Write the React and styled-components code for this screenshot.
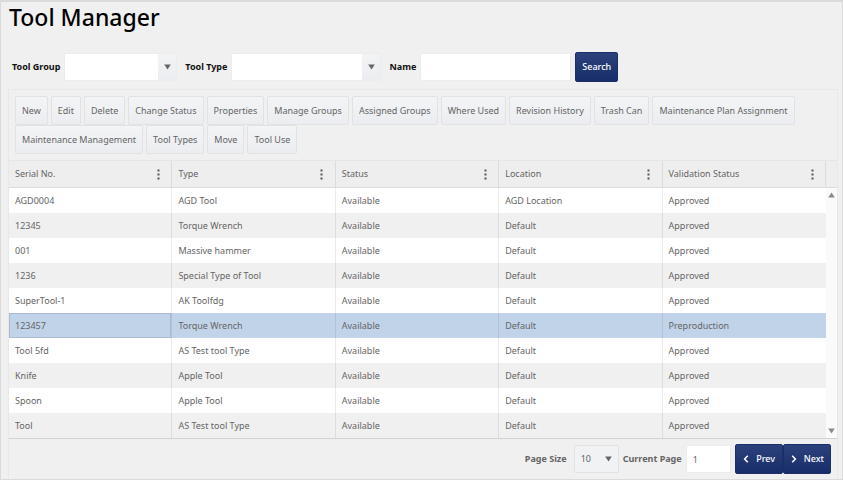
import React, { useState } from 'react';
import styled, { createGlobalStyle } from 'styled-components';

const GlobalStyle = createGlobalStyle`
  * {
    box-sizing: border-box;
  }
  body {
    margin: 0;
    background: #f0f0f0;
    color: #656565;
    font-family: "Noto Sans", "Open Sans", sans-serif;
    font-size: 9px;
    line-height: 12px;
  }
  button, input, select {
    font: inherit;
    color: inherit;
    margin: 0;
  }
`;

const Page = styled.main`
  min-height: 100vh;
  padding: 0 4px 0 7px;
  border: 1px solid #dadada;
  border-width: 2px 1px 1px 1px;
`;

const Title = styled.h1`
  margin: 0 0 20px 1px;
  font-size: 23px;
  line-height: 30px;
  font-weight: 500;
  color: #000;
`;

const SearchForm = styled.form`
  display: flex;
  align-items: center;
  gap: 4px;
  padding-left: 4px;
  margin-bottom: 7px;
`;

const Field = styled.div`
  display: flex;
  align-items: center;
  gap: ${p => p.$wide ? "7px" : "4px"};
  margin-right: ${p => p.$tight ? "0" : "4px"};
`;

const Label = styled.label`
  font-weight: 700;
  white-space: nowrap;
  color: ${p => p.$muted ? "#656565" : "#111"};
`;

const SelectBox = styled.div`
  display: grid;
  width: ${p => p.$width}px;
`;

const Select = styled.select`
  grid-area: 1 / 1;
  width: 100%;
  height: 28px;
  padding: 0 6px;
  appearance: none;
  border: 1px solid ${p => p.$flat ? "#e2e2e2" : "#ececec"};
  border-radius: 2px;
  background: ${p => p.$flat ? "#f1f2f4" : "#fff"};
`;

const SelectArrow = styled.span`
  grid-area: 1 / 1;
  justify-self: end;
  display: flex;
  align-items: center;
  justify-content: center;
  width: 18px;
  margin: 1px;
  pointer-events: none;
  background: ${p => p.$flat ? "none" : "linear-gradient(#f2f3f5, #ebedf0)"};
`;

const TextInput = styled.input`
  width: ${p => p.$width}px;
  height: 28px;
  padding: 0 6px;
  border: 1px solid #ececec;
  border-radius: 2px;
  background: #fff;
`;

const PrimaryButton = styled.button`
  display: flex;
  align-items: center;
  justify-content: center;
  gap: ${p => p.$paging ? "6px" : "0"};
  min-width: ${p => p.$paging ? "48px" : "43px"};
  height: 30px;
  padding: 0 6px;
  border: 1px solid #1a2f68;
  border-radius: 2px;
  background: linear-gradient(#2d427c, #172d69);
  color: #fff;
  font-weight: 500;
`;

const Panel = styled.section`
  border: 1px solid #e8e8e8;
  border-bottom: 0;
`;

const Toolbar = styled.div`
  display: flex;
  flex-wrap: wrap;
  column-gap: 3px;
  padding: 6px;
`;

const ToolButton = styled.button`
  height: 29px;
  padding: 0 6px;
  border: 1px solid #e1e2e3;
  border-radius: 2px;
  background: linear-gradient(#f3f4f6, #ebedf0);
`;

const Grid = styled.div`
  display: flex;
  border-top: 1px solid #e6e6e6;
  border-bottom: 1px solid #d2d2d2;
`;

const Table = styled.table`
  flex: 1;
  width: 100%;
  table-layout: fixed;
  border-collapse: separate;
  border-spacing: 0;
`;

const HeadCell = styled.th`
  height: 27px;
  padding: 0 6px;
  border-right: 1px solid #dcdcdc;
  border-bottom: 1px solid #dcdcdc;
  background: #eeeeee;
  font-weight: 400;
  text-align: left;
`;

const HeadContent = styled.div`
  display: flex;
  align-items: center;
  justify-content: space-between;
`;

const MenuButton = styled.button`
  display: flex;
  justify-content: center;
  width: 14px;
  padding: 0;
  border: 0;
  background: none;
`;

const Row = styled.tr`
  background: ${p => p.$selected ? "#c1d3e9" : "#fff"};

  &:nth-child(even) {
    background: ${p => p.$selected ? "#c1d3e9" : "#f0f0f0"};
  }
`;

const Cell = styled.td`
  height: 25px;
  padding: 0 6px;
  border-right: 1px solid rgba(0, 0, 0, 0.08);
  box-shadow: ${p => p.$focused ? "inset 0 0 0 1px #a9bad1" : "none"};

  &:last-child {
    border-right: 0;
  }
`;

const Scrollbar = styled.div`
  flex: none;
  display: flex;
  flex-direction: column;
  width: 11px;
  background: #fafafa;
`;

const ScrollHead = styled.div`
  height: 27px;
  border-bottom: 1px solid #dcdcdc;
  background: #eeeeee;
`;

const ScrollTrack = styled.div`
  flex: 1;
  display: flex;
  flex-direction: column;
  align-items: center;
  justify-content: space-between;
  padding: 4px 0;
`;

const Pager = styled.div`
  display: flex;
  align-items: center;
  justify-content: flex-end;
  gap: 4px;
  padding: 5px 6px 4px;
`;

const PagerButtons = styled.div`
  display: flex;
`;

const ArrowIcon = ({ up, color = "#656565" }) => (
  <svg width="7" height="6" viewBox="0 0 7 6" aria-hidden="true">
    <path d={up ? "M3.5 0.5 L6.8 5.5 H0.2 Z" : "M0.2 0.5 H6.8 L3.5 5.5 Z"} fill={color} />
  </svg>
);

const DotsIcon = () => (
  <svg width="3" height="11" viewBox="0 0 3 11" fill="#555" aria-hidden="true">
    <rect x="0.5" y="0.5" width="2" height="2" />
    <rect x="0.5" y="4.5" width="2" height="2" />
    <rect x="0.5" y="8.5" width="2" height="2" />
  </svg>
);

const Chevron = ({ right }) => (
  <svg width="8" height="8" viewBox="0 0 8 8" aria-hidden="true">
    <path
      d={right ? "M2.2 0.8 L5.4 4 L2.2 7.2" : "M5.8 0.8 L2.6 4 L5.8 7.2"}
      fill="none"
      stroke="#fff"
      strokeWidth="1.5"
    />
  </svg>
);

const actions = [
  "New", "Edit", "Delete", "Change Status", "Properties", "Manage Groups",
  "Assigned Groups", "Where Used", "Revision History", "Trash Can",
  "Maintenance Plan Assignment", "Maintenance Management", "Tool Types",
  "Move", "Tool Use",
];

const columns = ["Serial No.", "Type", "Status", "Location", "Validation Status"];

const tools = [
  ["AGD0004", "AGD Tool", "Available", "AGD Location", "Approved"],
  ["12345", "Torque Wrench", "Available", "Default", "Approved"],
  ["001", "Massive hammer", "Available", "Default", "Approved"],
  ["1236", "Special Type of Tool", "Available", "Default", "Approved"],
  ["SuperTool-1", "AK Toolfdg", "Available", "Default", "Approved"],
  ["123457", "Torque Wrench", "Available", "Default", "Preproduction"],
  ["Tool 5fd", "AS Test tool Type", "Available", "Default", "Approved"],
  ["Knife", "Apple Tool", "Available", "Default", "Approved"],
  ["Spoon", "Apple Tool", "Available", "Default", "Approved"],
  ["Tool", "AS Test tool Type", "Available", "Default", "Approved"],
];

const App = () => {

  const [selected, setSelected] = useState("123457");
  const [page, setPage] = useState(1);

  return (
    <>
      <GlobalStyle />
      <Page>
        <Title>Tool Manager</Title>
        <SearchForm onSubmit={e => e.preventDefault()}>
          <Field>
            <Label htmlFor="group">Tool Group</Label>
            <SelectBox $width={113}>
              <Select id="group"><option></option></Select>
              <SelectArrow><ArrowIcon /></SelectArrow>
            </SelectBox>
          </Field>
          <Field>
            <Label htmlFor="type">Tool Type</Label>
            <SelectBox $width={150}>
              <Select id="type"><option></option></Select>
              <SelectArrow><ArrowIcon /></SelectArrow>
            </SelectBox>
          </Field>
          <Field $tight>
            <Label htmlFor="name">Name</Label>
            <TextInput id="name" type="text" $width={151} />
          </Field>
          <PrimaryButton type="submit">Search</PrimaryButton>
        </SearchForm>
        <Panel>
          <Toolbar>
            {actions.map(action => <ToolButton key={action} type="button">{action}</ToolButton>)}
          </Toolbar>
          <Grid>
            <Table>
              <thead>
                <tr>
                  {columns.map(column => (
                    <HeadCell key={column}>
                      <HeadContent>
                        {column}
                        <MenuButton type="button" aria-label={`${column} menu`}><DotsIcon /></MenuButton>
                      </HeadContent>
                    </HeadCell>
                  ))}
                </tr>
              </thead>
              <tbody>
                {tools.map(tool => (
                  <Row key={tool[0]} $selected={tool[0] === selected} onClick={() => setSelected(tool[0])}>
                    {tool.map((value, i) => (
                      <Cell key={i} $focused={i === 0 && tool[0] === selected}>{value}</Cell>
                    ))}
                  </Row>
                ))}
              </tbody>
            </Table>
            <Scrollbar>
              <ScrollHead />
              <ScrollTrack>
                <ArrowIcon up color="#8a8a8a" />
                <ArrowIcon color="#8a8a8a" />
              </ScrollTrack>
            </Scrollbar>
          </Grid>
          <Pager>
            <Field $wide $tight>
              <Label $muted htmlFor="size">Page Size</Label>
              <SelectBox $width={45}>
                <Select $flat id="size" defaultValue="10">
                  <option>10</option>
                  <option>25</option>
                  <option>50</option>
                </Select>
                <SelectArrow $flat><ArrowIcon /></SelectArrow>
              </SelectBox>
            </Field>
            <Field $tight>
              <Label $muted htmlFor="page">Current Page</Label>
              <TextInput id="page" type="text" $width={45} value={page} onChange={e => setPage(e.target.value)} />
            </Field>
            <PagerButtons>
              <PrimaryButton $paging type="button" onClick={() => setPage(Math.max(1, Number(page) - 1))}>
                <Chevron />
                Prev
              </PrimaryButton>
              <PrimaryButton $paging type="button" onClick={() => setPage(Number(page) + 1)}>
                <Chevron right />
                Next
              </PrimaryButton>
            </PagerButtons>
          </Pager>
        </Panel>
      </Page>
    </>
  );
}

export default App;
